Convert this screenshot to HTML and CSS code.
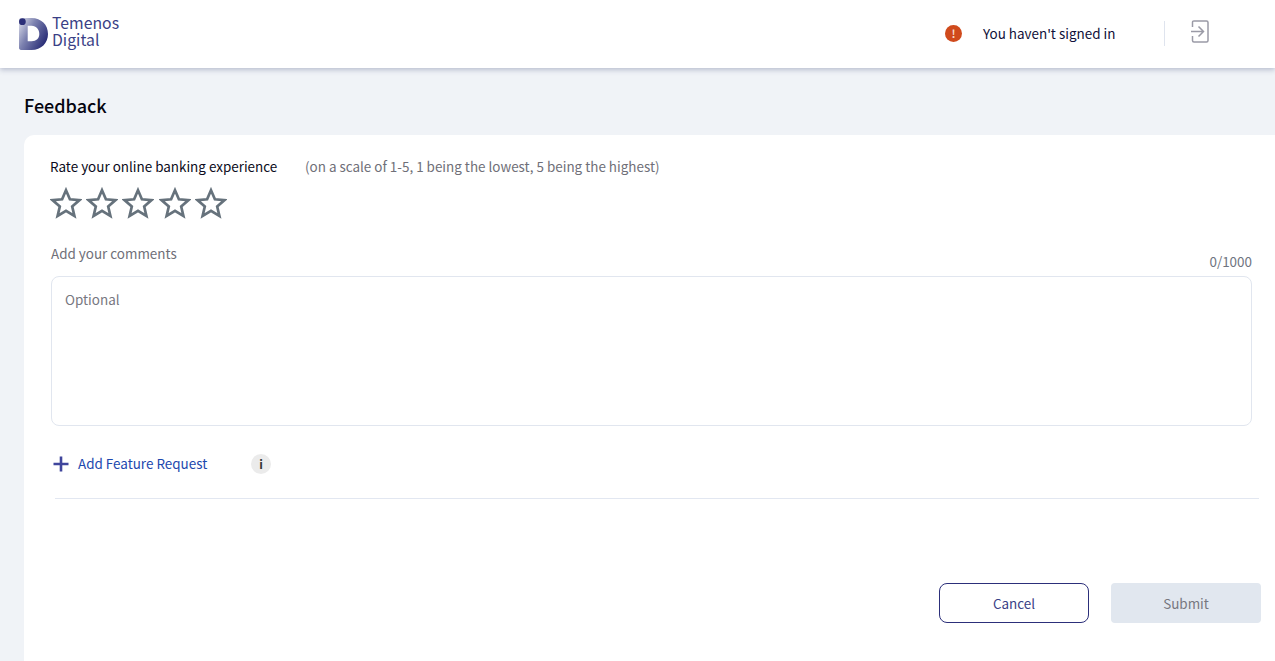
FILE: index.html
```html
<!DOCTYPE html>
<html lang="en">
<head>
<meta charset="utf-8">
<title>Feedback</title>
<link rel="stylesheet" href="styles.css">
</head>
<body>
<header class="topbar">
  <div class="brand">
    <svg class="brand-mark" width="29" height="32" viewBox="0 0 30 33">
      <defs>
        <linearGradient id="dgrad" x1="0" y1="0" x2="1" y2="0.6">
          <stop offset="0" stop-color="#e3e5ee"/>
          <stop offset="0.45" stop-color="#7d82b0"/>
          <stop offset="1" stop-color="#2b2f78"/>
        </linearGradient>
      </defs>
      <path fill="url(#dgrad)" fill-rule="evenodd" d="M2 0H13C23 0 30 7 30 16.500C30 26 23 33 13 33H2C.9 33 0 32.100 0 31V2C0 .9 .9 0 2 0ZM9 8V24H13C18 24 21 21 21 16.500C21 12 18 8 13 8Z"/>
      <circle cx="3.500" cy="3.800" r="3.500" fill="#2b2f78"/>
    </svg>
    <div class="brand-name"><div>Temenos</div><div>Digital</div></div>
  </div>
  <div class="session">
    <span class="alert-dot">!</span>
    <span class="session-text">You haven't signed in</span>
    <span class="session-sep"></span>
    <svg class="signin" width="18" height="23" viewBox="0 0 18 23" fill="none" stroke="#9a9aa6" stroke-width="1.500">
      <path d="M1.500 7V2.500C1.500 1.400 2 .9 3 .9H15.500C16.500 .9 17 1.400 17 2.500V20.500C17 21.500 16.500 22 15.500 22H3C2 22 1.500 21.500 1.500 20.500V16"/>
      <path d="M0 11.500H11.500M7.500 6.500L12.500 11.500L7.500 16.500"/>
    </svg>
  </div>
</header>
<main class="page">
  <h1 class="page-title">Feedback</h1>
  <section class="card">
    <div class="rate-row">
      <span class="rate-label">Rate your online banking experience</span>
      <span class="rate-hint">(on a scale of 1-5, 1 being the lowest, 5 being the highest)</span>
    </div>
    <div class="stars">
      <svg class="star" width="32" height="32" viewBox="0 0 32 32"><path d="M16 3.200L19.900 12.300L29.500 13.100L22.200 19.500L24.400 29L16 23.900L7.600 29L9.800 19.500L2.500 13.100L12.100 12.300Z"/></svg>
      <svg class="star" width="32" height="32" viewBox="0 0 32 32"><path d="M16 3.200L19.900 12.300L29.500 13.100L22.200 19.500L24.400 29L16 23.900L7.600 29L9.800 19.500L2.500 13.100L12.100 12.300Z"/></svg>
      <svg class="star" width="32" height="32" viewBox="0 0 32 32"><path d="M16 3.200L19.900 12.300L29.500 13.100L22.200 19.500L24.400 29L16 23.900L7.600 29L9.800 19.500L2.500 13.100L12.100 12.300Z"/></svg>
      <svg class="star" width="32" height="32" viewBox="0 0 32 32"><path d="M16 3.200L19.900 12.300L29.500 13.100L22.200 19.500L24.400 29L16 23.900L7.600 29L9.800 19.500L2.500 13.100L12.100 12.300Z"/></svg>
      <svg class="star" width="32" height="32" viewBox="0 0 32 32"><path d="M16 3.200L19.900 12.300L29.500 13.100L22.200 19.500L24.400 29L16 23.900L7.600 29L9.800 19.500L2.500 13.100L12.100 12.300Z"/></svg>
    </div>
    <div class="comment-head">
      <label class="comment-label" for="comments">Add your comments</label>
      <span class="counter">0/1000</span>
    </div>
    <textarea class="comment-box" id="comments" placeholder="Optional"></textarea>
    <div class="feature-row">
      <svg class="plus" width="16" height="16" viewBox="0 0 16 16"><path d="M8 .5V15.500M.5 8H15.500"/></svg>
      <a class="feature-link" href="#">Add Feature Request</a>
      <span class="info-badge">i</span>
    </div>
    <hr class="divider">
    <div class="actions">
      <button class="btn btn-cancel" type="button">Cancel</button>
      <button class="btn btn-submit" type="button" disabled>Submit</button>
    </div>
  </section>
</main>
</body>
</html>
```
FILE: styles.css
```css
* { box-sizing: border-box; }
html, body { height: 100%; }
body {
  margin: 0;
  background: #f0f3f7;
  font-family: "Noto Sans CJK SC", "Noto Sans", sans-serif;
  font-size: 13.450px;
  color: #000;
  overflow: hidden;
}
.topbar {
  height: 68px;
  background: #fff;
  box-shadow: 0 2px 5px rgba(60, 70, 120, 0.3);
  display: flex;
  justify-content: space-between;
  align-items: center;
  padding: 0 66px 2px 19px;
}
.brand { display: flex; align-items: center; gap: 4px; }
.brand-mark { display: block; margin-top: 1px; }
.brand-name {
  font-size: 15.800px;
  line-height: 17px;
  color: #3a3f86;
  margin-top: -4px;
}
.session { display: flex; align-items: center; }
.alert-dot {
  width: 17px;
  height: 17px;
  border-radius: 50%;
  background: #d04a1c;
  color: #f6d9c8;
  font-size: 11px;
  font-weight: 700;
  line-height: 17px;
  text-align: center;
}
.session-text { margin-left: 21px; color: #10103a; width: 181px; }
.session-sep {
  width: 1px;
  height: 25px;
  background: #dfe4ee;
  margin-right: 26px;
}
.signin { display: block; margin-bottom: 3px; }
.page { padding: 0 0 0 24px; }
.page-title {
  margin: 0;
  padding: 24px 0 17px 0;
  font-size: 18px;
  line-height: 26px;
  font-weight: 500;
  color: #050510;
}
.card {
  background: #fff;
  border-radius: 10px 0 0 0;
  height: 540px;
  padding: 21px 14px 0 26px;
}
.rate-row { display: flex; line-height: 20px; }
.rate-label { color: #0b0b20; width: 255px; }
.rate-hint { color: #6f6f78; }
.stars { display: flex; gap: 4.200px; margin-top: 11px; height: 32px; }
.star { display: block; }
.star path {
  fill: none;
  stroke: #66727c;
  stroke-width: 2.700;
  stroke-linejoin: miter;
}
.comment-head {
  display: flex;
  justify-content: space-between;
  margin: 16px 9px 0 1px;
  height: 41px;
}
.comment-label { color: #6f6f78; line-height: 20px; margin-top: 8px; }
.counter { color: #6f7480; line-height: 18px; margin-top: 17px; }
.comment-box {
  display: block;
  width: 1201px;
  height: 150px;
  margin: 0 0 0 1px;
  padding: 12px 13px;
  border: 1px solid #e1e6ef;
  border-radius: 8px;
  font: inherit;
  line-height: 20px;
  resize: none;
  outline: none;
}
.comment-box::placeholder { color: #77777f; opacity: 1; }
.feature-row {
  display: flex;
  align-items: center;
  height: 20px;
  margin: 28px 0 0 3px;
}
.plus { display: block; }
.plus path { stroke: #3f459c; stroke-width: 2.600; fill: none; }
.feature-link {
  margin-left: 9px;
  color: #1c48ae;
  text-decoration: none;
  width: 173px;
  line-height: 20px;
  padding-bottom: 2px;
}
.info-badge {
  width: 20px;
  height: 20px;
  border-radius: 50%;
  background: #ebebeb;
  color: #333;
  font-size: 12px;
  font-weight: 700;
  line-height: 20px;
  text-align: center;
}
.divider {
  border: 0;
  height: 1px;
  background: #e2e7f1;
  margin: 24px 2px 0 5px;
}
.actions {
  display: flex;
  justify-content: flex-end;
  gap: 22px;
  margin-top: 84px;
}
.btn {
  width: 150px;
  height: 40px;
  font: inherit;
  line-height: 20px;
  padding: 0;
}
.btn-cancel {
  background: #fff;
  border: 1px solid #2c2f7a;
  border-radius: 8px;
  color: #3a3f86;
}
.btn-submit {
  background: #e1e7ef;
  border: 0;
  border-radius: 4px;
  color: #77777f;
}
```
